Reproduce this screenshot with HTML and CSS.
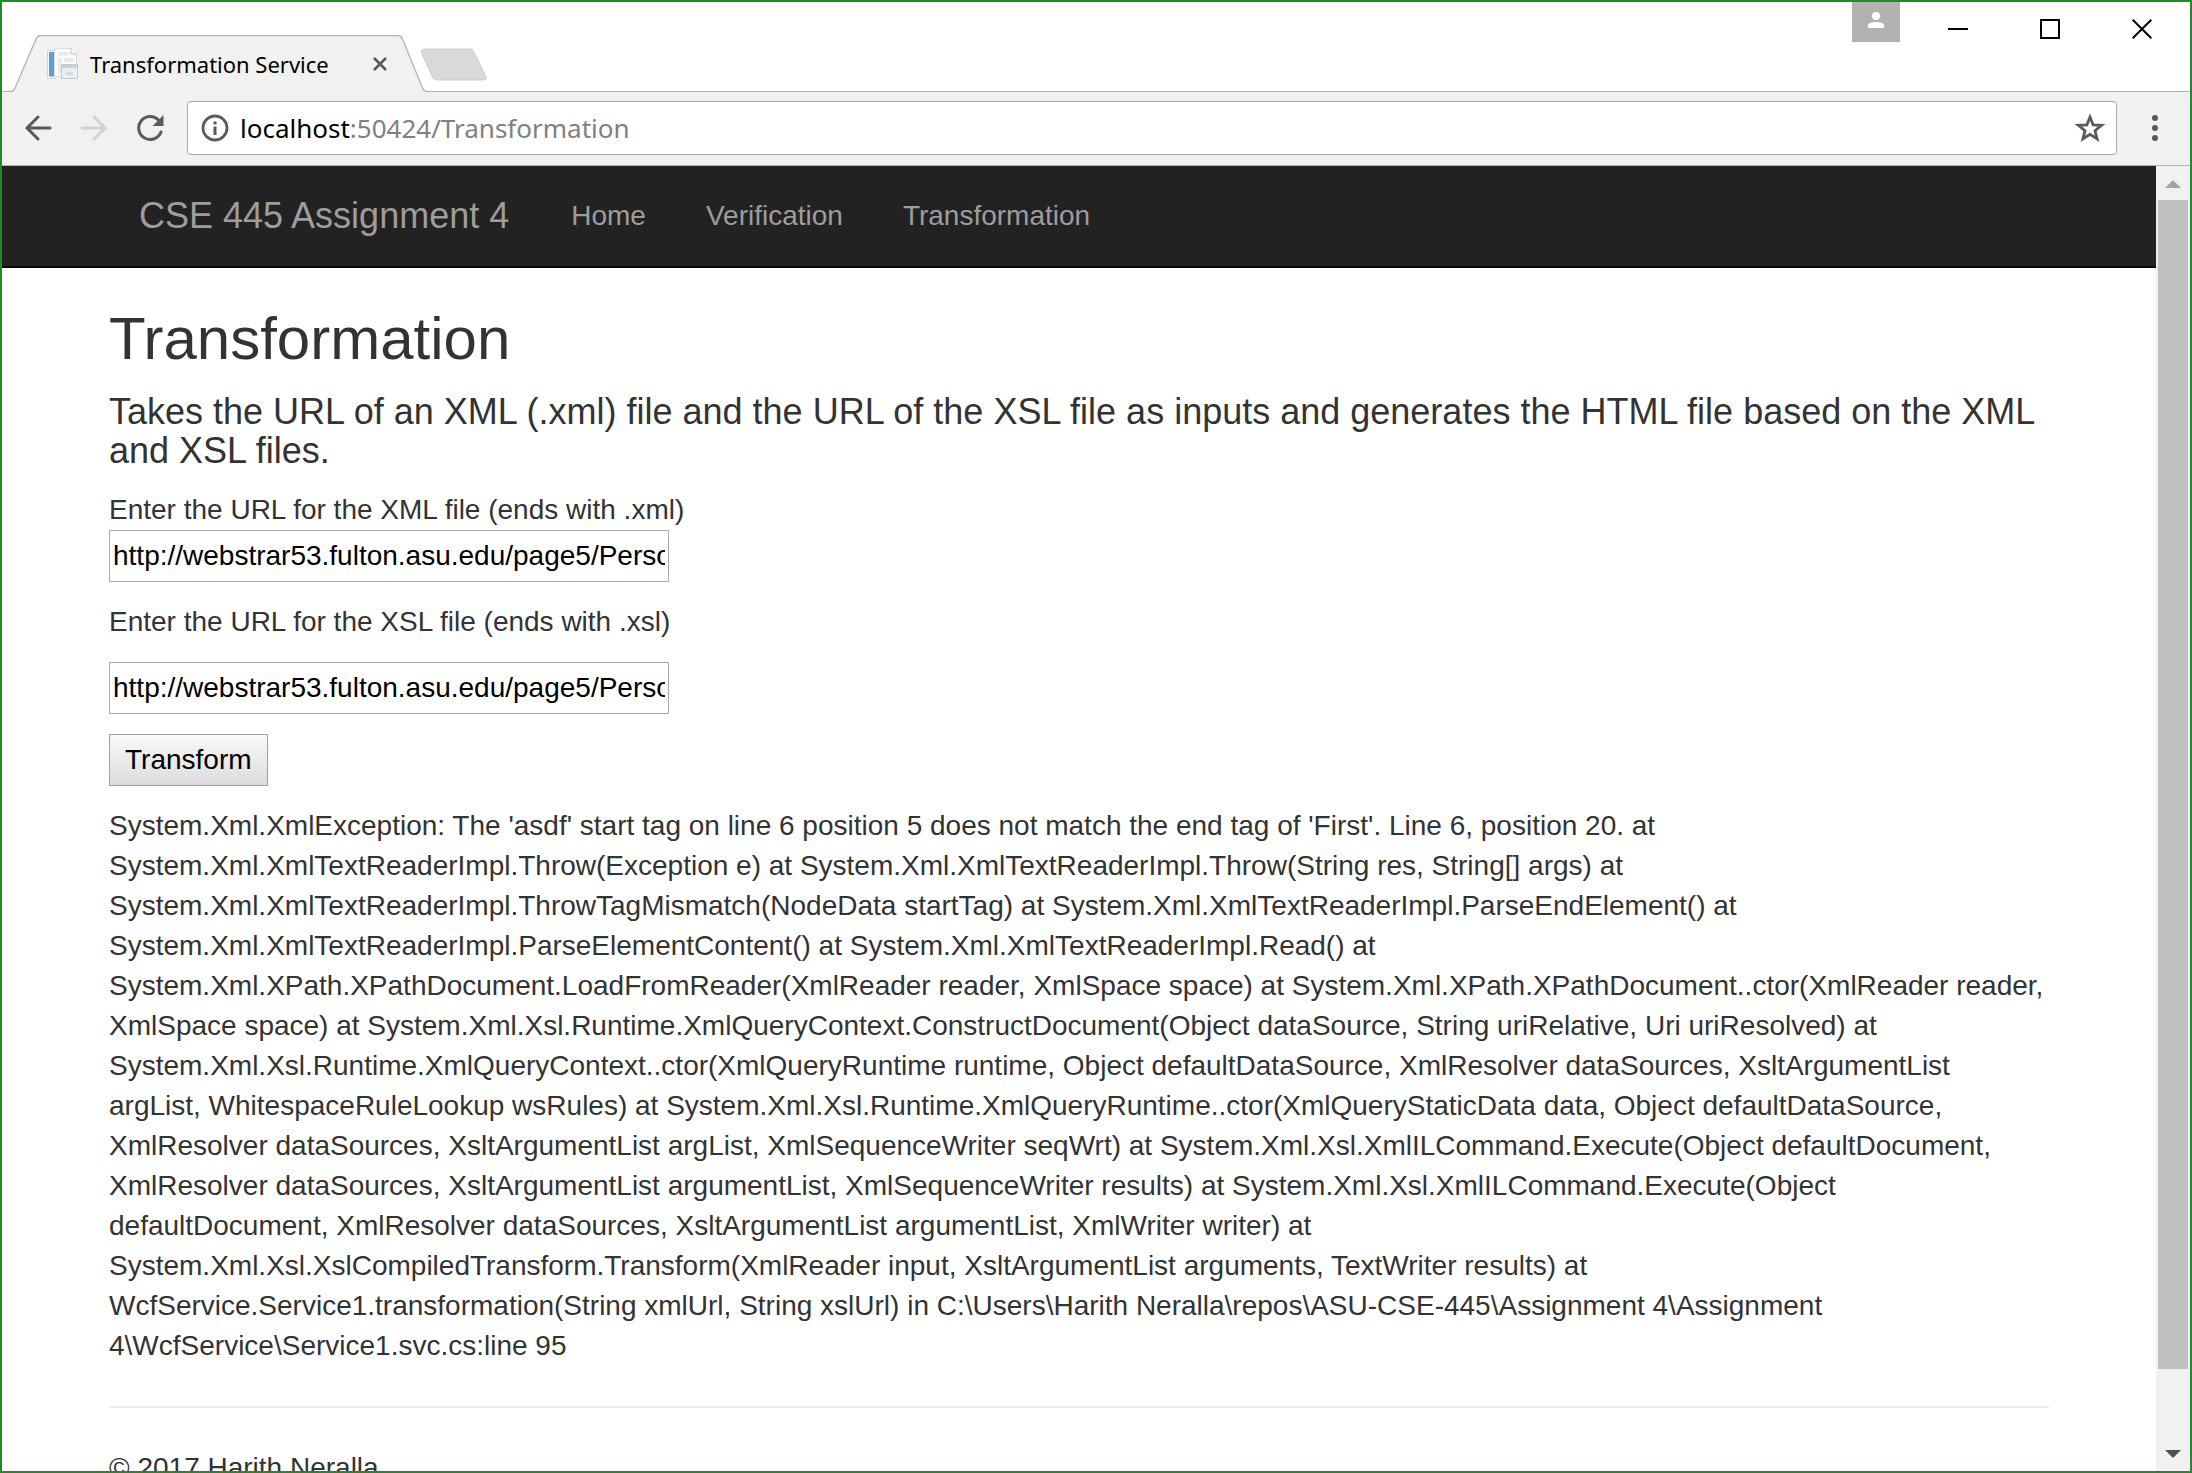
FILE: index.html
```html
<!DOCTYPE html>
<html lang="en">
<head>
<meta charset="utf-8">
<title>Transformation Service</title>
<link rel="stylesheet" href="styles.css">
</head>
<body>
<div class="window">
  <header class="titlebar">
    <div class="tab">
      <svg class="tab-shape" width="418" height="58" viewBox="0 0 418 58" aria-hidden="true"><path d="M0 58V56.500Q3.500 56.500 5 53L26 4Q27.500.5 30 .5H388Q391 .5 392.500 4L412.500 53Q414 56.500 418 56.500V58Z" fill="#f1f1f1"/><path d="M0 56.500Q3.500 56.500 5 53L26 4Q27.500.5 30 .5H388Q391 .5 392.500 4L412.500 53Q414 56.500 418 56.500" fill="none" stroke="#b3b3b3" stroke-width="1.300"/></svg>
      <svg class="favicon" width="34" height="34" viewBox="0 0 34 34" aria-hidden="true"><path d="M1.500 3.500H9V31.500H1.500Z" fill="#f8f9fb" stroke="#cfd2d6"/><path d="M3 5H8.500V29.500H3Z" fill="#5ba3d4"/><path d="M8.500 1.500H25L30.500 7V29.500H8.500Z" fill="#fbfbfc" stroke="#d9dbde"/><path d="M12 5H23V8.500H12ZM12 11H15.500V26H12ZM18 11H28V15H18Z" fill="#e6e9f0"/><path d="M25 1.500V7H30.500" fill="#fff" stroke="#b9bcc0"/><path d="M15.500 17.500H31.500V31.500H15.500Z" fill="#eceef3" stroke="#c5c8ce"/><path d="M16 18H31V21H16Z" fill="#cdd0d6"/><path d="M20 25H27V28H20Z" fill="#d6dbea"/></svg>
      <span class="tab-title">Transformation Service</span>
      <button class="tab-close" aria-label="Close tab"><svg width="16" height="16" viewBox="0 0 16 16"><path d="M2 2L14 14M14 2L2 14" stroke="#5a5a5a" stroke-width="2.600"/></svg></button>
    </div>
    <button class="new-tab" aria-label="New tab"><svg width="68" height="34" viewBox="0 0 68 34"><path d="M4 1H50Q53 1 54 4L66 29Q67 32 64 32H17Q14 32 13 30L1 4Q1 1 4 1Z" fill="#d9d9d9" stroke="#cfcfcf"/></svg></button>
    <div class="window-controls">
      <button class="user" aria-label="User"><svg width="16" height="16" viewBox="0 0 16 16"><circle cx="8" cy="4" r="4" fill="#fff"/><path d="M0 16V13Q1 10 8 10T16 13V16Z" fill="#fff"/></svg></button>
      <button class="control" aria-label="Minimize"><svg width="20" height="20" viewBox="0 0 20 20"><path d="M0 10H20" stroke="#000" stroke-width="2"/></svg></button>
      <button class="control" aria-label="Maximize"><svg width="20" height="20" viewBox="0 0 20 20"><path d="M1 1H19V19H1Z" fill="none" stroke="#000" stroke-width="2"/></svg></button>
      <button class="control" aria-label="Close"><svg width="20" height="20" viewBox="0 0 20 20"><path d="M.7.7L19.300 19.300M19.300.7L.7 19.300" stroke="#000" stroke-width="2"/></svg></button>
    </div>
  </header>
  <div class="toolbar">
    <button class="tool" aria-label="Back"><svg width="28" height="28" viewBox="0 0 28 28"><path d="M26 14H3M14 3L3 14L14 25" fill="none" stroke="#5a5a5a" stroke-width="3" stroke-linecap="round"/></svg></button>
    <button class="tool" aria-label="Forward"><svg width="28" height="28" viewBox="0 0 28 28"><path d="M2 14H25M14 3L25 14L14 25" fill="none" stroke="#d2d2d2" stroke-width="3" stroke-linecap="round"/></svg></button>
    <button class="tool" aria-label="Reload"><svg width="28" height="28" viewBox="0 0 28 28"><path d="M22.500 6A11.500 11.500 0 1 0 25 18" fill="none" stroke="#5a5a5a" stroke-width="3" stroke-linecap="round"/><path d="M27.500 1V12H16.500Z" fill="#5a5a5a"/></svg></button>
    <div class="omnibox">
      <svg width="28" height="28" viewBox="0 0 28 28" aria-hidden="true"><circle cx="14" cy="14" r="12" fill="none" stroke="#5a5a5a" stroke-width="2.800"/><path d="M12.500 7.500H15.500V10.500H12.500ZM12.500 12.500H15.500V21H12.500Z" fill="#5a5a5a"/></svg>
      <span class="url"><span class="host">localhost</span>:50424/Transformation</span>
      <button class="star" aria-label="Bookmark this page"><svg width="30" height="30" viewBox="0 0 30 30"><path d="M15 4L18.100 11.800L26.500 12.300L20 17.700L22.100 25.800L15 21.300L7.900 25.800L10 17.700L3.500 12.300L11.900 11.800Z" fill="none" stroke="#5a5a5a" stroke-width="2.800"/></svg></button>
    </div>
    <button class="menu" aria-label="Menu"><svg width="6" height="26" viewBox="0 0 6 26"><g fill="#5a5a5a"><circle cx="3" cy="3" r="3"/><circle cx="3" cy="13" r="3"/><circle cx="3" cy="23" r="3"/></g></svg></button>
  </div>
  <div class="viewport">
    <div class="page">
      <nav class="navbar">
        <div class="container navbar-inner">
          <a class="brand" href="#">CSE 445 Assignment 4</a>
          <a class="nav-link" href="#">Home</a>
          <a class="nav-link" href="#">Verification</a>
          <a class="nav-link" href="#">Transformation</a>
        </div>
      </nav>
      <main class="container">
        <h2>Transformation</h2>
        <h4>Takes the URL of an XML (.xml) file and the URL of the XSL file as inputs and generates the HTML file based on the XML and XSL files.</h4>
        <form class="form">
          <div class="field">
            <label for="xml">Enter the URL for the XML file (ends with .xml)</label>
            <input class="text-input" id="xml" type="text" value="http://webstrar53.fulton.asu.edu/page5/Persons.xml">
          </div>
          <label for="xsl">Enter the URL for the XSL file (ends with .xsl)</label>
          <input class="text-input" id="xsl" type="text" value="http://webstrar53.fulton.asu.edu/page5/Persons.xsl">
          <button class="submit" type="button">Transform</button>
        </form>
        <p class="result">System.Xml.XmlException: The 'asdf' start tag on line 6 position 5 does not match the end tag of 'First'. Line 6, position 20. at System.Xml.XmlTextReaderImpl.Throw(Exception e) at System.Xml.XmlTextReaderImpl.Throw(String res, String[] args) at System.Xml.XmlTextReaderImpl.ThrowTagMismatch(NodeData startTag) at System.Xml.XmlTextReaderImpl.ParseEndElement() at System.Xml.XmlTextReaderImpl.ParseElementContent() at System.Xml.XmlTextReaderImpl.Read() at System.Xml.XPath.XPathDocument.LoadFromReader(XmlReader reader, XmlSpace space) at System.Xml.XPath.XPathDocument..ctor(XmlReader reader, XmlSpace space) at System.Xml.Xsl.Runtime.XmlQueryContext.ConstructDocument(Object dataSource, String uriRelative, Uri uriResolved) at System.Xml.Xsl.Runtime.XmlQueryContext..ctor(XmlQueryRuntime runtime, Object defaultDataSource, XmlResolver dataSources, XsltArgumentList argList, WhitespaceRuleLookup wsRules) at System.Xml.Xsl.Runtime.XmlQueryRuntime..ctor(XmlQueryStaticData data, Object defaultDataSource, XmlResolver dataSources, XsltArgumentList argList, XmlSequenceWriter seqWrt) at System.Xml.Xsl.XmlILCommand.Execute(Object defaultDocument, XmlResolver dataSources, XsltArgumentList argumentList, XmlSequenceWriter results) at System.Xml.Xsl.XmlILCommand.Execute(Object defaultDocument, XmlResolver dataSources, XsltArgumentList argumentList, XmlWriter writer) at System.Xml.Xsl.XslCompiledTransform.Transform(XmlReader input, XsltArgumentList arguments, TextWriter results) at WcfService.Service1.transformation(String xmlUrl, String xslUrl) in C:\Users\Harith Neralla\repos\ASU-CSE-445\Assignment 4\Assignment 4\WcfService\Service1.svc.cs:line 95</p>
        <hr>
        <footer>© 2017 Harith Neralla</footer>
      </main>
    </div>
    <div class="scrollbar" aria-hidden="true">
      <svg width="16" height="8" viewBox="0 0 16 8"><path d="M0 8L8 0L16 8Z" fill="#a3a3a3"/></svg>
      <div class="track"><div class="thumb"></div><div class="rest"></div></div>
      <svg width="16" height="8" viewBox="0 0 16 8"><path d="M0 0L8 8L16 0Z" fill="#505050"/></svg>
    </div>
  </div>
</div>
</body>
</html>
```
FILE: styles.css
```css
* { box-sizing: border-box; }
body {
  margin: 0;
  font: 28px/40px "Liberation Sans", Arial, sans-serif;
  color: #333;
  background: #fff;
}
button { margin: 0; padding: 0; border: 0; background: none; font: inherit; color: inherit; }
svg { display: block; flex: none; }

.window {
  display: flex;
  flex-direction: column;
  height: 100vh;
  overflow: hidden;
  border: 2px solid #288828;
}

/* Title bar and tabs */
.titlebar {
  display: flex;
  flex: none;
  height: 90px;
  padding-left: 8px;
  border-bottom: 1px solid #b3b3b3;
  font-family: "Noto Sans", sans-serif;
}
.tab {
  position: relative;
  display: flex;
  align-items: center;
  width: 416px;
  height: 58px;
  margin-top: 33px;
  padding: 0 38px 0 36px;
  font-size: 22px;
  color: #000;
}
.tab-shape { position: absolute; left: 0; top: 0; }
.favicon { position: relative; }
.tab-title { position: relative; flex: 1; margin-left: 10px; white-space: nowrap; }
.tab-close { position: relative; }
.new-tab { align-self: flex-start; margin: 46px 0 0 -6px; }
.window-controls { display: flex; align-items: flex-start; margin-left: auto; padding-right: 2px; }
.user {
  display: flex;
  justify-content: center;
  width: 48px;
  height: 40px;
  margin-right: 12px;
  padding-top: 10px;
  background: #b2b2b2;
}
.control {
  display: flex;
  align-items: center;
  justify-content: center;
  width: 92px;
  height: 54px;
}

/* Address bar */
.toolbar {
  display: flex;
  flex: none;
  align-items: center;
  gap: 28px;
  height: 74px;
  padding: 0 32px 2px 22px;
  background: #f1f1f1;
  border-bottom: 1px solid #b3b3b3;
}
.omnibox {
  display: flex;
  flex: 1;
  align-items: center;
  height: 54px;
  margin-left: -5px;
  padding: 0 11px 0 13px;
  background: #fff;
  border: 1px solid #a9a9a9;
  border-radius: 4px;
  font-family: "Noto Sans", sans-serif;
  font-size: 26px;
  color: #808080;
}
.url { flex: 1; margin-left: 11px; }
.host { color: #000; }
.menu { margin-left: 7px; }

/* Page area */
.viewport { display: flex; flex: 1; min-height: 0; }
.page { flex: 1; min-width: 0; overflow: hidden; }
.container { max-width: 1940px; margin: 0 auto; }
.navbar { background: #222; border-bottom: 2px solid #090909; }
.navbar-inner { display: flex; height: 100px; align-items: center; }
.navbar a { padding: 0 30px; color: #9d9d9d; text-decoration: none; }
.navbar .brand { padding-right: 32px; font-size: 36px; }
h2 { margin: 38px 0 20px; font-size: 60px; line-height: 66px; font-weight: 400; }
h4 { margin: 0 0 20px; font-size: 36px; line-height: 39px; font-weight: 400; }
.form { display: flex; flex-direction: column; align-items: flex-start; gap: 20px; }
.field { display: flex; flex-direction: column; }
.text-input {
  width: 560px;
  height: 52px;
  padding: 2px 3px;
  border: 1px solid #a9a9a9;
  background: #fff;
  font: inherit;
  color: #000;
}
.submit {
  height: 52px;
  padding: 0 15px;
  border: 1px solid #a0a0a0;
  background: linear-gradient(#f8f8f8, #dddddd);
  color: #000;
}
.result { margin: 20px 0 40px; }
hr { margin: 0 0 40px; border: 0; border-top: 2px solid #eee; }

/* Scroll bar */
.scrollbar {
  display: flex;
  flex: none;
  flex-direction: column;
  align-items: center;
  width: 34px;
  padding: 14px 2px 13px;
  background: #f1f1f1;
}
.track { display: flex; flex: 1; flex-direction: column; width: 100%; padding: 12px 0; }
.thumb { flex: 17; background: #c1c1c1; }
.rest { flex: 1; }
```
